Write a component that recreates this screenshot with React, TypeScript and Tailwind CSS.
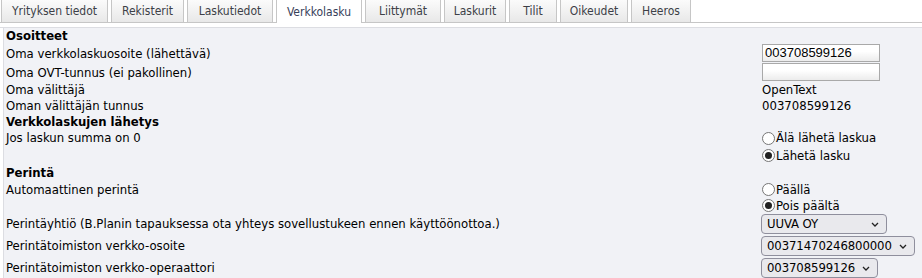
import React from "react";

const font = "font-['DejaVu_Sans_Condensed','DejaVu_Sans',sans-serif]";

const tabs: { label: string; w: string; active?: boolean }[] = [
  { label: "Yrityksen tiedot", w: "w-[107px]" },
  { label: "Rekisterit", w: "w-[73px]" },
  { label: "Laskutiedot", w: "w-[86px]" },
  { label: "Verkkolasku", w: "w-[86px]", active: true },
  { label: "Liittymät", w: "w-[76px]" },
  { label: "Laskurit", w: "w-[62px]" },
  { label: "Tilit", w: "w-[48px]" },
  { label: "Oikeudet", w: "w-[68px]" },
  { label: "Heeros", w: "w-[60px]" },
];

function Radio({ checked, label }: { checked?: boolean; label: string }) {
  return (
    <div className="flex items-center h-full">
      <span className="w-[13px] h-[13px] rounded-full border border-[#767676] bg-white flex items-center justify-center mr-[1px]">
        {checked && <span className="w-[7px] h-[7px] rounded-full bg-[#222]" />}
      </span>
      <span>{label}</span>
    </div>
  );
}

function Select({ value, w }: { value: string; w: string }) {
  return (
    <div
      className={`${w} h-[20px] rounded-[4px] border border-[#8f8f9d] bg-[#e9e9ed] flex items-center justify-between pl-[5px] pr-[7px] text-black`}
    >
      <span className="tracking-[-0.1px]">{value}</span>
      <svg width="8" height="5" viewBox="0 0 8 5" fill="none">
        <path d="M1 1l3 3l3-3" stroke="#222" strokeWidth="1.3" />
      </svg>
    </div>
  );
}

function Input({ value }: { value?: string }) {
  return (
    <div className="w-[118px] h-[18px] border border-[#a9a9a9] bg-gradient-to-b from-white from-40% to-[#ececec] flex items-center pl-[2px] font-['Liberation_Sans',Arial,sans-serif] text-[13px] text-black">
      {value}
    </div>
  );
}

function Row({
  h,
  label,
  bold,
  children,
}: {
  h: string;
  label: string;
  bold?: boolean;
  children?: React.ReactNode;
}) {
  return (
    <div className={`flex ${h}`}>
      <div className={`w-[756px] flex items-center ${bold ? "font-bold" : ""}`}>{label}</div>
      <div className="flex-1">{children}</div>
    </div>
  );
}

export default function App() {
  return (
    <div className={`w-[922px] h-[278px] overflow-hidden bg-white ${font} text-[13px] leading-4 text-black`}>
      <div className="flex h-[23px] border-b border-[#c6c6c6] pl-[1px] gap-[3px]">
        {tabs.map((t) => (
          <div
            key={t.label}
            className={`${t.w} flex items-center justify-center border-x border-[#c6c6c6] text-[12px] ${
              t.active
                ? "h-[23px] bg-white text-[#37415a]"
                : "h-[22px] bg-gradient-to-b from-[#fbfbfb] to-[#e8e8e8] text-[#3c3f47]"
            }`}
          >
            {t.label}
          </div>
        ))}
      </div>
      <div className="h-[5px] bg-white border-b border-[#dcdde2]" />
      <div className="ml-[3px] h-full border-l border-[#dcdde2] bg-[#f1f2f6] pl-[2px]">
        <Row h="h-[16px]" label="Osoitteet" bold />
        <Row h="h-[19px]" label="Oma verkkolaskuosoite (lähettävä)">
          <Input value="003708599126" />
        </Row>
        <Row h="h-[19px]" label="Oma OVT-tunnus (ei pakollinen)">
          <Input />
        </Row>
        <Row h="h-[16px]" label="Oma välittäjä">
          <div className="h-full flex items-center">OpenText</div>
        </Row>
        <Row h="h-[16px]" label="Oman välittäjän tunnus">
          <div className="h-full flex items-center">003708599126</div>
        </Row>
        <Row h="h-[16px]" label="Verkkolaskujen lähetys" bold />
        <div className="flex h-[35px]">
          <div className="w-[756px] h-[16px] flex items-center">Jos laskun summa on 0</div>
          <div className="flex-1 flex flex-col">
            <div className="h-[16px]">
              <Radio label="Älä lähetä laskua" />
            </div>
            <div className="h-[19px]">
              <Radio checked label="Lähetä lasku" />
            </div>
          </div>
        </div>
        <Row h="h-[16px]" label="Perintä" bold />
        <div className="flex h-[32px]">
          <div className="w-[756px] h-[17px] flex items-center">Automaattinen perintä</div>
          <div className="flex-1 flex flex-col">
            <div className="h-[17px]">
              <Radio label="Päällä" />
            </div>
            <div className="h-[15px]">
              <Radio checked label="Pois päältä" />
            </div>
          </div>
        </div>
        <div className="flex h-[22px] items-center">
          <div className="w-[755px]">
            Perintäyhtiö (B.Planin tapauksessa ota yhteys sovellustukeen ennen käyttöönottoa.)
          </div>
          <Select value="UUVA OY" w="w-[126px]" />
        </div>
        <div className="flex h-[22px] items-center">
          <div className="w-[755px]">Perintätoimiston verkko-osoite</div>
          <Select value="00371470246800000" w="w-[154px]" />
        </div>
        <div className="flex h-[22px] items-center">
          <div className="w-[755px]">Perintätoimiston verkko-operaattori</div>
          <Select value="003708599126" w="w-[117px]" />
        </div>
      </div>
    </div>
  );
}
